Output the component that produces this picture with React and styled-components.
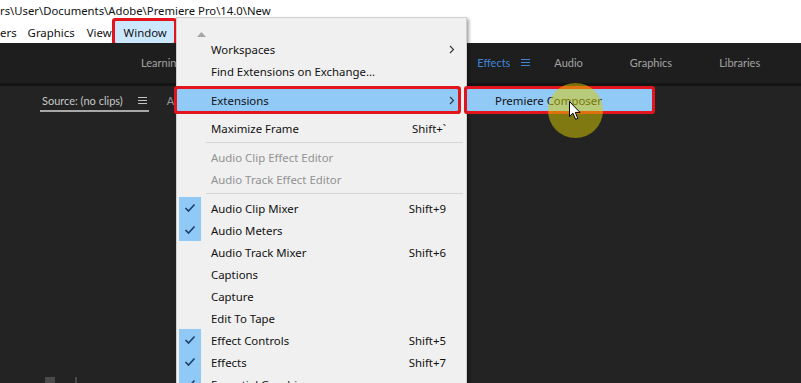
import React from "react";
import styled, { createGlobalStyle } from "styled-components";

const Global = createGlobalStyle`
  html, body { margin: 0; padding: 0; background: #232323; }
  body { width: 801px; height: 383px; overflow: hidden; }
  * { box-sizing: border-box; }
`;

const UI = `"Noto Sans", "Segoe UI", Arial, sans-serif`;
const ADOBE = `Lato, "Noto Sans", Arial, sans-serif`;

const Page = styled.div`
  position: relative;
  width: 801px;
  height: 383px;
  overflow: hidden;
  display: flex;
  flex-direction: column;
  background: #232323;
`;

const TitleBar = styled.div`
  height: 21px;
  background: #ffffff;
  font: 11.3px ${UI};
  color: #111;
  line-height: 22px;
  white-space: nowrap;
`;

const MenuBar = styled.div`
  height: 22px;
  background: #ffffff;
  display: flex;
  align-items: stretch;
  font: 11.4px ${UI};
  color: #111;
`;

const MenuBarItem = styled.div`
  display: flex;
  align-items: center;
  padding: ${(p) => (p.$active ? "0 7px 0 9px" : p.$first ? "0 5px 0 0" : "0 6px")};
  margin-left: ${(p) => (p.$active ? "-3px" : "0")};
  background: ${(p) => (p.$active ? "#cce8ff" : "transparent")};
  box-shadow: ${(p) => (p.$active ? "0 0 0 3px #e3141b" : "none")};
  border-radius: 1px;
`;

const WorkspaceBar = styled.div`
  height: 40px;
  padding-bottom: 2px;
  background: #1e1e1e;
  display: flex;
  align-items: center;
  gap: 47px;
  padding-left: 141px;
  font: 11px ${ADOBE};
  color: #a3a3a3;
  white-space: nowrap;
`;

const Tab = styled.div`
  display: flex;
  align-items: center;
  gap: 11px;
  color: ${(p) => (p.$active ? "#3f86d6" : "#a3a3a3")};
  margin-right: ${(p) => (p.$active ? "-23px" : "0")};
  margin-left: ${(p) => (p.$active ? "1px" : "0")};
`;

const Divider = styled.div`
  height: 3px;
  background: #141414;
`;

const PanelArea = styled.div`
  flex: 1;
  display: flex;
  flex-direction: column;
  background: #232323;
`;

const PanelHeader = styled.div`
  display: flex;
  align-items: flex-start;
  padding: 8px 0 0 40px;
  gap: 16px;
  font: 11px ${ADOBE};
  color: #c4c4c4;
  white-space: nowrap;
`;

const PanelTab = styled.div`
  display: flex;
  align-items: center;
  gap: 15px;
  padding: 0 2px 3px;
  border-bottom: 2px solid ${(p) => (p.$active ? "#a8a8a8" : "transparent")};
  color: ${(p) => (p.$active ? "#c8c8c8" : "#9a9a9a")};
`;

const PanelFooter = styled.div`
  margin-top: auto;
  height: 6px;
  display: flex;
  gap: 20px;
  padding-left: 45px;
  align-items: flex-start;
`;

const FooterIcon = styled.div`
  width: ${(p) => p.$w}px;
  height: 6px;
  background: #4a4a4a;
`;

/* dropdown */
const DropMenu = styled.div`
  position: absolute;
  left: 176px;
  top: 17px;
  width: 291px;
  height: 400px;
  background: #f0f0f0;
  border: 1px solid #cfcfcf;
  box-shadow: 2px 2px 3px rgba(0, 0, 0, 0.35);
  font: 11.4px ${UI};
  color: #111;
`;

const ScrollArrow = styled.div`
  height: 20px;
  padding-left: 20px;
  padding-top: 7px;
`;

const Row = styled.div`
  height: 22px;
  margin-right: 8px;
  padding-left: 2px;
  display: grid;
  grid-template-columns: 22px 1fr auto 12px;
  align-items: center;
  white-space: nowrap;
  color: ${(p) => (p.$disabled ? "#929292" : "#111")};
  background: ${(p) => (p.$hot ? "#91c9f7" : "transparent")};
  box-shadow: ${(p) => (p.$hot ? "0 0 0 3px #e3141b" : "none")};
  border-radius: 1px;
  position: relative;
`;

const CheckCell = styled.div`
  height: 22px;
  display: flex;
  align-items: center;
  justify-content: center;
  background: ${(p) => (p.$on ? "#90c8f6" : "transparent")};
`;

const Label = styled.span`
  padding-left: 10px;
`;

const Shortcut = styled.span`
  text-align: right;
`;

const ArrowCell = styled.div`
  display: flex;
  align-items: center;
  padding-left: 3px;
`;

const Sep = styled.div`
  height: ${(p) => p.$h}px;
  display: flex;
  align-items: center;
  margin: 0 3px 0 29px;
  &::after {
    content: "";
    flex: 1;
    height: 1px;
    background: ${(p) => (p.$hidden ? "transparent" : "#d5d5d5")};
  }
`;

const SubMenu = styled.div`
  position: absolute;
  left: 467px;
  top: 89px;
  width: 185px;
  height: 22px;
  background: #91c9f7;
  box-shadow: 0 0 0 3px #e3141b;
  border-radius: 1px;
  font: 11.4px ${UI};
  color: #111;
  display: flex;
  align-items: center;
  padding-left: 28px;
  white-space: nowrap;
`;

const Halo = styled.div`
  position: absolute;
  left: 548px;
  top: 83px;
  width: 55px;
  height: 55px;
  border-radius: 50%;
  background: rgba(222, 206, 0, 0.5);
  pointer-events: none;
`;

const CursorWrap = styled.div`
  position: absolute;
  left: 569px;
  top: 101px;
  width: 13px;
  height: 20px;
`;

const Chevron = () => (
  <svg width="6" height="9" viewBox="0 0 6 9">
    <path d="M1 1 L4.5 4.5 L1 8" fill="none" stroke="#333" strokeWidth="1.1" />
  </svg>
);

const Check = () => (
  <svg width="12" height="10" viewBox="0 0 12 10">
    <path d="M1.5 5 L4.5 8 L10.5 1.5" fill="none" stroke="#1b3f6b" strokeWidth="1.6" />
  </svg>
);

const Hamburger = ({ color }) => (
  <svg width="9" height="9" viewBox="0 0 9 9">
    <path d="M0 1.5 H9 M0 4.5 H9 M0 7.5 H9" stroke={color} strokeWidth="1.2" />
  </svg>
);

const items = [
  { label: "Workspaces", arrow: true },
  { label: "Find Extensions on Exchange..." },
  { sep: 7, hidden: true },
  { label: "Extensions", arrow: true, hot: true },
  { sep: 6, hidden: true },
  { label: "Maximize Frame", sc: "Shift+`" },
  { sep: 7 },
  { label: "Audio Clip Effect Editor", disabled: true },
  { label: "Audio Track Effect Editor", disabled: true },
  { sep: 7 },
  { label: "Audio Clip Mixer", sc: "Shift+9", check: true },
  { label: "Audio Meters", check: true },
  { label: "Audio Track Mixer", sc: "Shift+6" },
  { label: "Captions" },
  { label: "Capture" },
  { label: "Edit To Tape" },
  { label: "Effect Controls", sc: "Shift+5", check: true },
  { label: "Effects", sc: "Shift+7", check: true },
  { label: "Essential Graphics", check: true },
];

const tabs = ["Learning", "Assembly", "Editing", "Color", "Effects", "Audio", "Graphics", "Libraries"];

export default function App() {
  return (
    <Page>
      <Global />
      <TitleBar>rs\User\Documents\Adobe\Premiere Pro\14.0\New</TitleBar>
      <MenuBar>
        <MenuBarItem $first>ers</MenuBarItem>
        <MenuBarItem>Graphics</MenuBarItem>
        <MenuBarItem>View</MenuBarItem>
        <MenuBarItem $active>Window</MenuBarItem>
      </MenuBar>
      <WorkspaceBar>
        {tabs.map((t) => (
          <Tab key={t} $active={t === "Effects"}>
            {t}
            {t === "Effects" && <Hamburger color="#3f86d6" />}
          </Tab>
        ))}
      </WorkspaceBar>
      <Divider />
      <PanelArea>
        <PanelHeader>
          <PanelTab $active>
            Source: (no clips)
            <Hamburger color="#c4c4c4" />
          </PanelTab>
          <PanelTab>Audio Clip Mixer</PanelTab>
        </PanelHeader>
        <PanelFooter>
          <FooterIcon $w={10} />
          <FooterIcon $w={2} />
        </PanelFooter>
      </PanelArea>

      <DropMenu>
        <ScrollArrow>
          <svg width="9" height="5" viewBox="0 0 9 5">
            <path d="M0 5 L4.5 0 L9 5 Z" fill="#a6a6a6" />
          </svg>
        </ScrollArrow>
        {items.map((it, i) =>
          it.sep ? (
            <Sep key={i} $h={it.sep} $hidden={it.hidden} />
          ) : (
            <Row key={i} $hot={it.hot} $disabled={it.disabled}>
              <CheckCell $on={it.check}>{it.check && <Check />}</CheckCell>
              <Label>{it.label}</Label>
              <Shortcut>{it.sc || ""}</Shortcut>
              <ArrowCell>{it.arrow && <Chevron />}</ArrowCell>
            </Row>
          )
        )}
      </DropMenu>

      <SubMenu>Premiere Composer</SubMenu>
      <Halo />
      <CursorWrap>
        <svg width="13" height="20" viewBox="0 0 13 20">
          <path d="M0.5 0.5 L0.5 15.5 L4 12.2 L6.6 18.3 L8.8 17.4 L6.3 11.4 L11 11.4 Z" fill="#fff" stroke="#000" strokeWidth="1" strokeLinejoin="miter" />
        </svg>
      </CursorWrap>
    </Page>
  );
}
